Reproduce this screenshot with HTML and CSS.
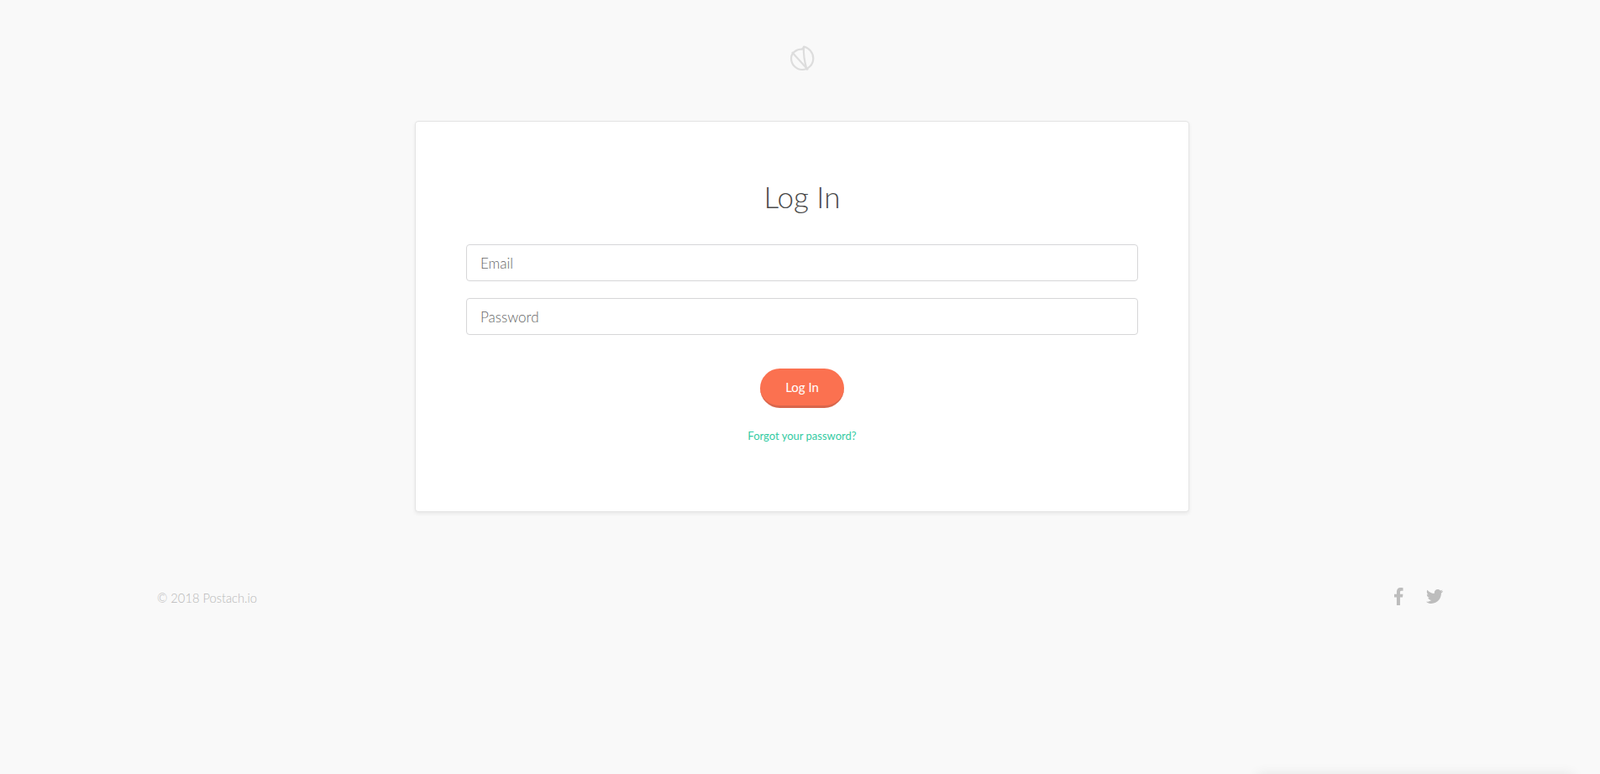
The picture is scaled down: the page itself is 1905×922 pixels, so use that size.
FILE: index.html
```html
<!DOCTYPE html>
<html lang="en">
<head>
  <meta charset="UTF-8">
  <title>Log In - Postach.io</title>
  <link rel="stylesheet" href="styles.css">
</head>
<body>
  <main class="main">
    <header class="top">
      <a href="#" class="logo">
        <svg width="30" height="32" viewBox="0 0 30 32" fill="none" stroke="#ddd" stroke-width="2.2" stroke-linecap="round">
          <path d="M15 4.500C8 4.500 2 9 2 15.500 2 23 8 29 15 29c7.500 0 13.300-6 13.300-13.500C28.300 9 23.500 3 17 1.500"/>
          <path d="M3.500 8.700 21.500 28.500"/>
          <path d="M15 4.500C16 4 16.500 3 17 1.500 16.500 9 18 20 20.500 28.500"/>
        </svg>
      </a>
    </header>

    <div class="card">
      <h1>Log In</h1>
      <form class="login-form">
        <input type="text" placeholder="Email">
        <input type="password" placeholder="Password">
        <button type="button" class="btn">Log In</button>
        <a href="#" class="forgot">Forgot your password?</a>
      </form>
    </div>
  </main>

  <footer class="footer">
    <span class="copy">© 2018 Postach.io</span>
    <div class="social">
      <a href="#">
        <svg width="11" height="21" viewBox="0 0 12 20" preserveAspectRatio="none" fill="#bdbdbd"><path d="M3.200 20V11H0V7.300H3.200V4.800C3.200 1.800 5.100 0 8 0c1.400 0 2.900.1 3.500.2V3.600H9.500C8 3.600 7.600 4.300 7.600 5.400V7.300H11.400L10.900 11H7.600V20Z"/></svg>
      </a>
      <a href="#">
        <svg width="20" height="17" viewBox="0 0 24 20" preserveAspectRatio="none" fill="#bdbdbd"><path d="M24 2.400c-.9.400-1.800.7-2.800.8 1-.6 1.800-1.600 2.200-2.700-1 .6-2 1-3.100 1.200C19.300.7 18 0 16.600 0c-2.700 0-4.900 2.200-4.900 4.900 0 .4 0 .8.100 1.100C7.700 5.800 4.100 3.900 1.700.9 1.200 1.700 1 2.500 1 3.400c0 1.700.9 3.200 2.200 4.100-.8 0-1.600-.2-2.200-.6v.1c0 2.400 1.700 4.400 3.900 4.800-.4.100-.8.200-1.300.2-.3 0-.6 0-.9-.1.600 2 2.400 3.400 4.600 3.400-1.700 1.300-3.800 2.100-6.100 2.100-.4 0-.8 0-1.200-.1C2.200 19.300 4.800 20 7.500 20c9.100 0 14-7.500 14-14v-.6c1-.7 1.800-1.600 2.500-2.600z"/></svg>
      </a>
    </div>
  </footer>

  <div class="corner-widget"></div>
</body>
</html>
```

FILE: styles.css
```css
* { box-sizing: border-box; }
html, body { height: 100%; }
body {
  margin: 0;
  background: #f9f9f9;
  font-family: Lato, "Open Sans", sans-serif;
  color: #555;
  overflow: hidden;
}
a { text-decoration: none; }

.main { padding-left: 5px; }
.top { height: 144px; padding-top: 54px; display: flex; justify-content: center; align-items: flex-start; }
.logo { display: block; height: 32px; }

.card {
  width: 922px;
  height: 466px;
  margin: 0 auto;
  padding: 64px 60px 0;
  background: #fff;
  border: 1px solid #e4e4e4;
  border-radius: 4px;
  box-shadow: 0 2px 4px rgba(0, 0, 0, .07);
}
.card h1 {
  margin: 0 0 32px;
  font-size: 35px;
  line-height: 50px;
  font-weight: 300;
  text-align: center;
  color: #4a4a4a;
}

.login-form { display: flex; flex-direction: column; align-items: center; }
.login-form input {
  width: 100%;
  height: 44px;
  margin-bottom: 20px;
  padding: 0 16px;
  border: 1px solid #d6d6d8;
  border-radius: 4px;
  background: #fff;
  font-family: Lato, sans-serif;
  font-size: 17px;
  font-weight: 300;
  outline: none;
}
.login-form input::placeholder { color: #666; opacity: 1; }

.btn {
  width: 100px;
  height: 47px;
  margin-top: 20px;
  border: 0;
  border-bottom: 3px solid #d9664c;
  border-radius: 24px;
  background: #fb7150;
  color: #fff;
  font-family: Lato, sans-serif;
  font-size: 15px;
  font-weight: 400;
}
.forgot { margin-top: 25px; font-size: 13px; line-height: 16px; color: #35cba3; }

.footer {
  width: 1531px;
  margin: 90px 0 0 187px;
  display: flex;
  justify-content: space-between;
  align-items: center;
  height: 24px;
}
.copy { font-size: 14.7px; font-weight: 300; color: #b8b8b8; }
.social { display: flex; align-items: center; gap: 27px; margin-bottom: 3px; }
.social a { display: flex; }

/* widget hanging just below the fold, only its shadow shows */
.corner-widget {
  position: fixed;
  left: 1497px;
  top: 922px;
  width: 376px;
  height: 60px;
  background: #fff;
  box-shadow: 0 0 14px rgba(0, 0, 0, .08);
}
```
